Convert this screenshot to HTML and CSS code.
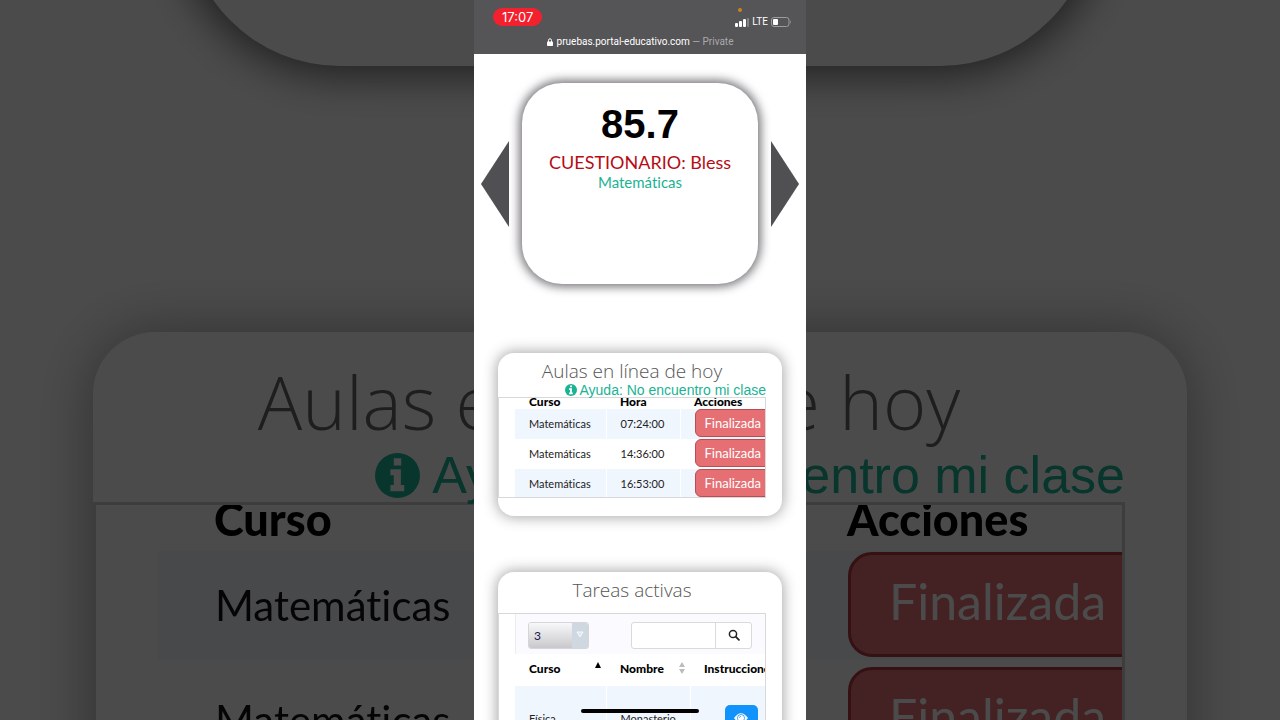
FILE: index.html
```html
<!DOCTYPE html>
<html lang="es">
<head>
<meta charset="utf-8">
<meta name="viewport" content="width=device-width, initial-scale=1">
<title>Portal educativo</title>
<link rel="stylesheet" href="styles.css">
</head>
<body>
<div class="stage">
  <div class="backdrop" aria-hidden="true" inert>
    <div class="big-slide"></div>
    <section class="big-card">
      <h2 class="big-title">Aulas en línea de hoy</h2>
      <a class="big-help" href="#ayuda">
        <svg class="big-help-icon" viewBox="0 0 12 12"><circle cx="6" cy="6" r="6" fill="currentColor"/><path d="M5 1.4h2v1.9H5zM4.1 4.3h2.8v4.2h.9v1.7H4.1V8.5H5V5.9h-.9z" fill="#fff"/></svg>
        <span>Ayuda: No encuentro mi clase</span>
      </a>
      <div class="big-box">
        <table class="big-table">
          <thead><tr><th>Curso</th><th></th><th>Acciones</th></tr></thead>
          <tbody>
            <tr><td>Matemáticas</td><td></td><td><button class="big-done" type="button">Finalizada</button></td></tr>
            <tr><td>Matemáticas</td><td></td><td><button class="big-done" type="button">Finalizada</button></td></tr>
          </tbody>
        </table>
      </div>
    </section>
  </div>

  <div class="phone">
    <header class="status">
      <div class="status-row">
        <span class="clock">17:07</span>
        <div class="signals">
          <svg class="bars" viewBox="0 0 14 20"><circle cx="5" cy="3" r="2" fill="#c98324"/><rect x="0" y="16" width="3" height="4" rx="1" fill="#fff"/><rect x="4" y="14" width="3" height="6" rx="1" fill="#fff"/><rect x="8" y="12" width="3" height="8" rx="1" fill="#fff"/><rect x="12" y="11" width="2" height="9" rx="1" fill="#858487"/></svg>
          <span class="lte">LTE</span>
          <svg class="battery" viewBox="0 0 21 10"><rect x=".5" y=".5" width="17.5" height="9" rx="2.5" fill="none" stroke="#9c9b9e"/><path d="M19 3q1.6 2 0 4" fill="#9c9b9e"/><rect x="2" y="2" width="5" height="6" rx="1" fill="#fff"/></svg>
        </div>
      </div>
      <div class="address">
        <svg class="lock" viewBox="0 0 6 8"><path d="M1.5 4V2.3a1.5 1.5 0 0 1 3 0V4" fill="none" stroke="#fff"/><rect y="3.4" width="6" height="4.6" rx=".8" fill="#fff"/></svg>
        <span>pruebas.portal-educativo.com <span class="private">— Private</span></span>
      </div>
    </header>

    <main class="content">
      <section class="carousel">
        <button class="arrow" type="button" aria-label="Anterior"><svg viewBox="0 0 28 86"><path d="M28 0v86L0 43z" fill="#504f52"/></svg></button>
        <article class="slide">
          <strong class="score">85.7</strong>
          <span class="quiz">CUESTIONARIO: Bless</span>
          <span class="subject">Matemáticas</span>
        </article>
        <button class="arrow" type="button" aria-label="Siguiente"><svg viewBox="0 0 28 86"><path d="M0 0v86l28-43z" fill="#504f52"/></svg></button>
      </section>

      <section class="card">
        <h2 class="card-title">Aulas en línea de hoy</h2>
        <a class="help" href="#ayuda">
          <svg class="help-icon" viewBox="0 0 12 12" aria-hidden="true"><circle cx="6" cy="6" r="6" fill="currentColor"/><path d="M5 1.4h2v1.9H5zM4.1 4.3h2.8v4.2h.9v1.7H4.1V8.5H5V5.9h-.9z" fill="#fff"/></svg>
          <span>Ayuda: No encuentro mi clase</span>
        </a>
        <div class="box">
          <table class="classes">
            <thead><tr><th>Curso</th><th>Hora</th><th>Acciones</th></tr></thead>
            <tbody>
              <tr><td>Matemáticas</td><td>07:24:00</td><td><button class="done" type="button">Finalizada</button></td></tr>
              <tr><td>Matemáticas</td><td>14:36:00</td><td><button class="done" type="button">Finalizada</button></td></tr>
              <tr><td>Matemáticas</td><td>16:53:00</td><td><button class="done" type="button">Finalizada</button></td></tr>
            </tbody>
          </table>
        </div>
      </section>

      <section class="card tasks">
        <h2 class="card-title">Tareas activas</h2>
        <div class="box">
          <form class="toolbar">
            <div class="pager">
              <select class="pager-select" aria-label="Filas por página"><option>3</option><option>5</option><option>10</option></select>
              <svg class="pager-arrow" viewBox="0 0 16 26" aria-hidden="true"><path d="M0 0h16v26H0z" fill="#cfd8e1"/><path d="M5 9h6l-3 5z" fill="#dfe5eb" stroke="#fff" stroke-width=".8"/></svg>
            </div>
            <div class="search">
              <input class="search-input" type="text" aria-label="Buscar">
              <button class="search-button" type="button" aria-label="Buscar"><svg viewBox="0 0 12 12"><circle cx="5" cy="5" r="3.6" fill="none" stroke="#222" stroke-width="1.5"/><path d="M7.7 7.7l3.2 3.2" stroke="#222" stroke-width="1.8" stroke-linecap="round"/></svg></button>
            </div>
          </form>
          <table class="task-table">
            <thead>
              <tr>
                <th><span class="sort">Curso <svg class="sort-icon" viewBox="0 0 6 12"><path d="M0 6l3-6 3 6z" fill="#000"/></svg></span></th>
                <th><span class="sort">Nombre <svg class="sort-icon" viewBox="0 0 6 12"><path d="M0 5l3-5 3 5zM0 7l3 5 3-5z" fill="#bdbcbf"/></svg></span></th>
                <th>Instrucciones</th>
              </tr>
            </thead>
            <tbody>
              <tr>
                <td>Física</td><td>Monasterio</td>
                <td><button class="view" type="button" aria-label="Ver"><svg viewBox="0 0 14 10"><path d="M0 5q7-9.500 14 0q-7 9.500-14 0z" fill="#fff"/><circle cx="7" cy="5" r="3.700" fill="#1292fb"/><circle cx="7" cy="5" r="3" fill="#fff"/><path d="M5.500 4.800q0-1.500 1.500-1.500" fill="none" stroke="#1292fb" stroke-width=".7"/></svg></button></td>
              </tr>
            </tbody>
          </table>
        </div>
      </section>
    </main>
    <div class="home-indicator"></div>
  </div>
</div>
</body>
</html>
```
FILE: styles.css
```css
* { box-sizing: border-box; }

body {
  margin: 0;
  background: #4b4b4b;
  font-family: Lato, sans-serif;
  font-variant-ligatures: none;
}

button {
  margin: 0;
  padding: 0;
  border: 0;
  background: none;
  font: inherit;
}

table {
  border-collapse: collapse;
  table-layout: fixed;
}

th, td {
  padding: 0;
  text-align: left;
}

svg { display: block; }

.stage {
  display: grid;
  height: 100vh;
  overflow: hidden;
}

.backdrop,
.phone {
  grid-area: 1 / 1;
  min-width: 0;
  min-height: 0;
  height: 100vh;
  overflow: hidden;
}

/* Enlarged, dimmed backdrop */
.backdrop {
  background: #fff;
  filter: brightness(0.295);
}

.big-slide {
  height: 400px;
  margin: -334px 185px 266px;
  border-radius: 155px;
  background: #fff;
  box-shadow: 0 0 44px 8px rgba(0, 0, 0, 0.62);
}

.big-card {
  height: 632px;
  margin: 0 93px;
  padding: 18px 62px 0 0;
  border-radius: 62px;
  background: #fff;
  box-shadow: 0 0 60px 0 rgba(0, 0, 0, 0.36);
}

.big-title {
  margin: 0;
  font: 300 74px/104px "Open Sans", sans-serif;
  color: #666;
  text-align: center;
  white-space: nowrap;
}

.big-help {
  display: flex;
  justify-content: flex-end;
  align-items: center;
  gap: 12px;
  height: 42px;
  margin-bottom: 6px;
  font: 52px/42px "Liberation Sans", sans-serif;
  color: #1ab394;
  text-decoration: none;
  white-space: nowrap;
}

.big-help-icon { width: 45px; }

.big-box {
  height: 387px;
  padding-left: 62px;
  border: 3px solid #d0d0d0;
  overflow: hidden;
}

.big-table {
  width: 1050px;
  font-size: 42px;
  color: #111;
}

.big-table th {
  width: 352px;
  height: 46px;
  padding-left: 56px;
  font-size: 45px;
  font-weight: 900;
  line-height: 28px;
  vertical-align: top;
  color: #000;
}

.big-table th:nth-child(2) { width: 281px; }
.big-table th:last-child { width: 417px; }

.big-table td {
  height: 115px;
  padding: 0 0 8px 57px;
}

.big-table tbody tr:nth-child(odd) td {
  background: linear-gradient(#f0f6ff, #f0f6ff) no-repeat 0 0 / 100% 109px;
}

.big-done {
  display: block;
  width: 380px;
  height: 105px;
  padding: 0 0 8px 38px;
  border: 3px solid #b53a3f;
  border-radius: 24px;
  background: #e66f73;
  color: #fff;
  font-size: 50px;
  text-align: left;
}

/* Phone */
.phone {
  position: relative;
  width: 100%;
  max-width: 332px;
  justify-self: center;
  background: #fff;
}

.status {
  height: 54px;
  padding: 0 14px;
  background: #555457;
  color: #fff;
  font-family: Roboto, sans-serif;
}

.status-row {
  display: flex;
  align-items: center;
  justify-content: space-between;
  height: 34px;
  padding-left: 5px;
}

.clock {
  padding: 0 9px;
  border-radius: 9px;
  background: #f3212d;
  font: 13px/18px Inter, sans-serif;
}

.signals {
  display: flex;
  align-items: flex-end;
  gap: 3px;
  padding-bottom: 3px;
  height: 26px;
}

.bars { width: 14px; height: 20px; }
.lte { font-size: 10px; line-height: 10px; }
.battery { width: 21px; height: 10px; }

.address {
  display: flex;
  justify-content: center;
  align-items: center;
  gap: 4px;
  height: 16px;
  font-size: 10px;
  line-height: 16px;
  white-space: nowrap;
}

.lock { width: 6px; height: 8px; }
.private { color: #aaa9ac; }

.carousel {
  display: flex;
  align-items: center;
  gap: 13px;
  padding: 29px 7px 69px;
}

.arrow {
  flex: none;
  width: 28px;
}

.slide {
  flex: 1;
  display: flex;
  flex-direction: column;
  align-items: center;
  min-width: 0;
  height: 201px;
  padding-top: 19px;
  border-radius: 40px;
  background: #fff;
  box-shadow: 0 0 10px 3px rgba(40, 36, 42, 0.62);
}

.score {
  font: bold 40px/44px "Liberation Sans", sans-serif;
}

.quiz {
  margin-top: 4px;
  font-size: 18px;
  line-height: 24px;
  color: #b60d15;
  white-space: nowrap;
}

.subject {
  font-size: 15px;
  line-height: 16px;
  color: #1ab394;
}

.card {
  margin: 0 24px 56px;
  padding: 6px 16px 18px 0;
  border-radius: 16px;
  background: #fff;
  box-shadow: 0 0 14px 1px rgba(40, 36, 42, 0.42);
}

.card-title {
  margin: 0;
  font: 300 19px/25px "Open Sans", sans-serif;
  color: #555;
  text-align: center;
}

.help {
  display: flex;
  justify-content: flex-end;
  align-items: center;
  gap: 2px;
  height: 12px;
  margin-bottom: 1px;
  font: 14px/12px "Liberation Sans", sans-serif;
  color: #1ab394;
  text-decoration: none;
  white-space: nowrap;
}

.help-icon { width: 12px; }

.box {
  padding-left: 16px;
  border: 1px solid #d8d8da;
  overflow: hidden;
}

.classes,
.task-table {
  width: 300px;
  font-size: 11px;
  color: #222;
}

.classes th,
.task-table th {
  width: 91px;
  padding-left: 14px;
  font-size: 12px;
  font-weight: 900;
  color: #000;
}

.classes th {
  height: 11px;
  line-height: 8px;
  vertical-align: top;
}

.classes th:nth-child(2) { width: 74px; }
.classes th:last-child { width: 135px; }

.classes td {
  height: 30px;
  padding: 0 0 2px 14px;
  border-right: 1px solid #fff;
}

.classes tr:last-child td { height: 28px; padding-bottom: 0; }

.classes tbody tr:nth-child(odd) td,
.task-table td {
  background: #f0f6fe;
}

.done {
  display: block;
  width: 100px;
  height: 28px;
  padding: 0 0 1px 9px;
  border: 1px solid #b94d54;
  border-radius: 6px;
  background: #e66f73;
  color: #fff;
  font-size: 13px;
  text-align: left;
}

.tasks { margin-bottom: 0; }
.tasks .card-title { padding-bottom: 10px; }

.toolbar {
  display: flex;
  align-items: center;
  justify-content: space-between;
  height: 40px;
  padding: 2px 13px 0 12px;
  border-left: 1px solid #ebebf0;
  background: #fafaff;
}

.pager {
  position: relative;
  width: 61px;
  height: 27px;
  border: 1px solid #d5d5da;
  border-radius: 3px;
  overflow: hidden;
}

.pager-select {
  width: 100%;
  height: 100%;
  padding: 0 5px;
  border: 0;
  appearance: none;
  background: linear-gradient(#f8f8fa, #c9c8cc);
  font: 12px Lato, sans-serif;
  color: #15154a;
}

.pager-arrow {
  position: absolute;
  top: 0;
  right: 0;
  width: 16px;
  pointer-events: none;
}

.search {
  display: flex;
  width: 121px;
  height: 27px;
  border: 1px solid #dadadd;
  border-radius: 3px;
  background: #fff;
}

.search-input {
  flex: 1;
  min-width: 0;
  border: 0;
  background: none;
}

.search-button {
  display: grid;
  place-items: center;
  width: 36px;
  border-left: 1px solid #dadadd;
}

.search-button svg { width: 12px; }

.task-table th {
  height: 32px;
  padding-bottom: 4px;
  white-space: nowrap;
}

.task-table th:nth-child(2) { width: 84px; }
.task-table th:last-child { width: 125px; }

.task-table td {
  height: 64px;
  padding-left: 14px;
  border-right: 1px solid #fff;
}

.sort {
  display: flex;
  align-items: center;
  justify-content: space-between;
  padding-right: 5px;
}

.sort-icon { width: 6px; height: 12px; }

.view {
  display: grid;
  place-items: center;
  width: 33px;
  height: 27px;
  margin-left: 20px;
  border-radius: 5px;
  background: #1292fb;
}

.view svg { width: 14px; }

.home-indicator {
  position: absolute;
  bottom: 7px;
  left: 50%;
  width: 118px;
  height: 4px;
  margin-left: -59px;
  border-radius: 2px;
  background: #000;
}
```
